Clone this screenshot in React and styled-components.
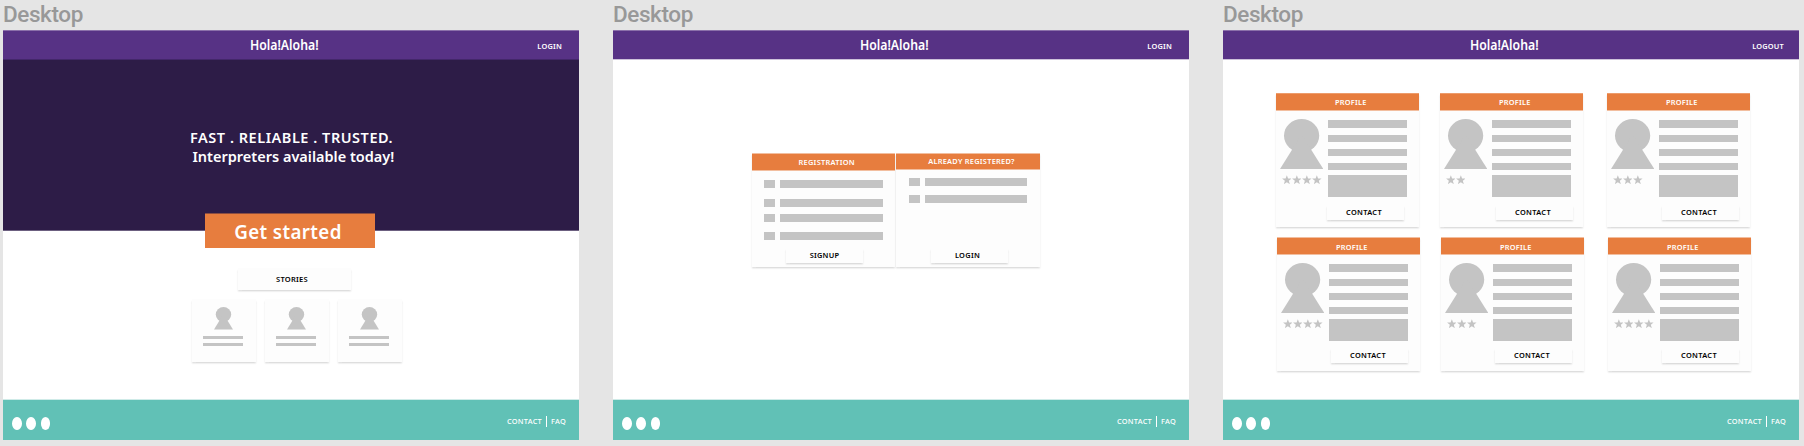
import React from "react";
import styled, { createGlobalStyle } from "styled-components";

const Global = createGlobalStyle`
  * { box-sizing: border-box; }
  body { margin: 0; background: #e5e5e5; overflow: hidden; font-family: "Noto Sans", "Open Sans", sans-serif; }
`;

const Canvas = styled.main`
  display: flex;
  gap: 34px;
  height: 446px;
  padding-left: 3px;
`;
const Artboard = styled.section`
  width: 576px;
  flex: none;
  display: flex;
  flex-direction: column;
`;
const ArtboardName = styled.div`
  height: 30px;
  line-height: 29px;
  font-family: Roboto, sans-serif;
  font-size: 22.5px;
  font-weight: 500;
  letter-spacing: -0.4px;
  color: #989898;
`;
const Screen = styled.div`
  height: 410px;
  background: #fff;
  display: flex;
  flex-direction: column;
`;
const Header = styled.header`
  height: 30px;
  background: #573285;
  border-top: 1px solid #8b70aa;
  border-bottom: 1px solid ${(p) => (p.$overHero ? "#43276a" : "#cdc2da")};
  display: flex;
  justify-content: space-between;
  padding-left: 246.5px;
  color: #fff;
`;
const Brand = styled.h1`
  margin: 0;
  font-size: 14.6px;
  font-weight: 600;
  line-height: 26px;
  white-space: nowrap;
  transform: scaleX(0.84);
  transform-origin: left;
`;
const HeaderLink = styled.a`
  font-size: 7.4px;
  font-weight: 600;
  letter-spacing: 0.2px;
  line-height: 30px;
  padding-right: ${(p) => p.$right}px;
`;
const Body = styled.div`
  flex: 1;
  display: flex;
  flex-direction: column;
`;
const Footer = styled.footer`
  height: 41px;
  background: #61c1b6;
  border-top: 1px solid #cfebe8;
  display: flex;
  justify-content: space-between;
  padding: 17px 13px 0 9px;
  color: #fff;
`;
const Dots = styled.div`
  display: flex;
  gap: 4.8px;
`;
const Dot = styled.i`
  width: 9.6px;
  height: 13px;
  border-radius: 50%;
  background: #fff;
`;
const FooterLinks = styled.nav`
  display: flex;
  font-size: 7.4px;
  font-weight: 500;
  letter-spacing: 0.25px;
  line-height: 8px;
`;
const Divider = styled.i`
  width: 1px;
  height: 11px;
  margin: -1px 4px 0;
  background: #fff;
`;

const Hero = styled.div`
  height: 171px;
  background: #2d1c47;
  border-bottom: 1px solid #6c6080;
  display: flex;
  flex-direction: column;
  align-items: flex-start;
  padding: 68px 0 0 187px;
  color: #fff;
`;
const HeroLine = styled.p`
  margin: 0 0 0 ${(p) => p.$indent}px;
  font-size: 14.5px;
  font-weight: 600;
  line-height: 19px;
  letter-spacing: ${(p) => p.$spacing}px;
  white-space: nowrap;
`;
const GetStarted = styled.button`
  border: 0;
  border-top: 1px solid #8a4d42;
  padding: 1px 4px 0 0;
  width: 170px;
  height: 35px;
  margin: -18px 0 0 202px;
  background: #e77d3e;
  color: #fff;
  font: 600 18.8px "Noto Sans", sans-serif;
  letter-spacing: 0.38px;
`;
const Raised = styled.div`
  background: #fdfdfd;
  box-shadow: 0 1.6px 1.6px rgba(0, 0, 0, 0.13);
`;
const StoriesTitle = styled(Raised)`
  width: 113px;
  height: 22px;
  margin: 20px 0 0 235px;
  padding-right: 5px;
  text-align: center;
  font-size: 7.5px;
  font-weight: 600;
  letter-spacing: 0.25px;
  line-height: 22px;
`;
const Stories = styled.div`
  display: flex;
  gap: 9px;
  margin: 9px 0 0 189px;
`;
const Story = styled(Raised)`
  width: 64px;
  height: 63px;
  padding: 8px 13px 0 11px;
  display: flex;
  flex-direction: column;
  align-items: center;
`;
const StoryLine = styled.i`
  width: 40px;
  height: 3px;
  margin-top: ${(p) => p.$top}px;
  background: #c4c4c4;
`;

const Forms = styled.div`
  display: flex;
  gap: 1px;
  margin: 93px 0 0 139px;
`;
const Card = styled(Raised)`
  width: ${(p) => p.$width}px;
  height: ${(p) => p.$height}px;
  margin-left: ${(p) => p.$left || 0}px;
`;
const CardHeader = styled.h2`
  margin: 0;
  height: ${(p) => p.$height || 18}px;
  margin-bottom: ${(p) => 17 - (p.$height || 18)}px;
  background: #e77d3e;
  border-top: 1px solid ${(p) => p.$edge};
  border-bottom: 1px solid #f2be9f;
  color: #fff;
  text-align: center;
  font-size: 7.4px;
  font-weight: 600;
  letter-spacing: ${(p) => p.$spacing}px;
  line-height: ${(p) => p.$line}px;
  padding-left: ${(p) => p.$shift || 0}px;
`;
const Field = styled.div`
  display: flex;
  gap: 5px;
  margin: ${(p) => p.$top}px 0 0 ${(p) => p.$left || 12}px;
`;
const Block = styled.i`
  display: block;
  width: ${(p) => p.$w}px;
  height: ${(p) => p.$h}px;
  margin-top: ${(p) => p.$top || 0}px;
  background: #c4c4c4;
`;
const CardButton = styled(Raised).attrs({ as: "button" })`
  display: block;
  border: 0;
  padding: 0 ${(p) => p.$pad || 0}px 0 0;
  width: 77px;
  height: 15px;
  margin: ${(p) => p.$top}px 0 0 ${(p) => p.$left}px;
  color: #000;
  font: 600 7.4px/15px "Noto Sans", sans-serif;
  letter-spacing: ${(p) => p.$spacing || 0.3}px;
`;

const Profiles = styled.div`
  display: flex;
  margin: ${(p) => p.$top}px 0 0 ${(p) => p.$left}px;
`;
const ProfileBody = styled.div`
  display: flex;
  gap: 5px;
  padding: 9px 0 0 4px;
`;
const PersonColumn = styled.div`
  width: 43px;
`;
const Stars = styled.div`
  display: flex;
  gap: 0.6px;
  margin: 5.5px 0 0 1.5px;
`;

const Person = ({ w, h }) => (
  <svg width={w} height={h} viewBox="0 0 43.3 50" preserveAspectRatio="none" fill="#c4c4c4" display="block">
    <ellipse cx="21.6" cy="16.7" rx="17.6" ry="16.7" />
    <path d="M21.6 15.4 43.3 50H0Z" />
  </svg>
);
const Star = () => (
  <svg width="9.7" height="9.7" viewBox="0 0 20 20" fill="#c4c4c4">
    <path d="M10 .5 12.6 7.1H19.8L14.1 11.7 16.1 18.9 10 14.8 3.9 18.9 5.9 11.7.2 7.1H7.4Z" />
  </svg>
);

const Page = ({ link, right, overHero, children }) => (
  <Artboard>
    <ArtboardName>Desktop</ArtboardName>
    <Screen>
      <Header $overHero={overHero}>
        <Brand>Hola!Aloha!</Brand>
        <HeaderLink $right={right}>{link}</HeaderLink>
      </Header>
      <Body>{children}</Body>
      <Footer>
        <Dots><Dot /><Dot /><Dot /></Dots>
        <FooterLinks><span>CONTACT</span><Divider /><span>FAQ</span></FooterLinks>
      </Footer>
    </Screen>
  </Artboard>
);

const Profile = ({ left, stars, buttonLeft, buttonTop, edge, line = 17 }) => (
  <Card $width={143} $height={134} $left={left}>
    <CardHeader $line={line} $spacing={0.25} $shift={6.5} $edge={edge}>PROFILE</CardHeader>
    <ProfileBody>
      <PersonColumn>
        <Person w={43.3} h={50} />
        <Stars>{Array.from({ length: stars }, (_, i) => <Star key={i} />)}</Stars>
      </PersonColumn>
      <div>
        <Block $w={79} $h={8} $top={1} />
        <Block $w={79} $h={7} $top={7} />
        <Block $w={79} $h={7} $top={7} />
        <Block $w={79} $h={7} $top={7} />
        <Block $w={79} $h={22} $top={5} />
      </div>
    </ProfileBody>
    <CardButton $left={buttonLeft} $top={buttonTop} $pad={3}>CONTACT</CardButton>
  </Card>
);

export default function App() {
  return (
    <>
      <Global />
      <Canvas>
        <Page link="LOGIN" right={17} overHero>
          <Hero>
            <HeroLine $indent={0} $spacing={0.53}>FAST . RELIABLE . TRUSTED.</HeroLine>
            <HeroLine $indent={2.5} $spacing={0}>Interpreters available today!</HeroLine>
          </Hero>
          <GetStarted>Get started</GetStarted>
          <StoriesTitle>STORIES</StoriesTitle>
          <Stories>
            {[0, 1, 2].map((i) => (
              <Story key={i}>
                <Person w={19} h={22.5} />
                <StoryLine $top={6.5} />
                <StoryLine $top={4} />
              </Story>
            ))}
          </Stories>
        </Page>

        <Page link="LOGIN" right={17}>
          <Forms>
            <Card $width={143} $height={114}>
              <CardHeader $line={17} $spacing={0.28} $shift={6.5} $edge="#f2be9f">REGISTRATION</CardHeader>
              {[10, 11, 7, 10].map((top, i) => (
                <Field key={i} $top={top}><Block $w={11} $h={8} /><Block $w={103} $h={8} /></Field>
              ))}
              <CardButton $left={34} $top={8} $spacing={0.2}>SIGNUP</CardButton>
            </Card>
            <Card $width={144} $height={114}>
              <CardHeader $height={17} $line={15} $spacing={0.26} $shift={7} $edge="#f2be9f">ALREADY REGISTERED?</CardHeader>
              {[8, 9].map((top, i) => (
                <Field key={i} $top={top} $left={13}><Block $w={11} $h={8} /><Block $w={102} $h={8} /></Field>
              ))}
              <CardButton $left={35} $top={45} $pad={4}>LOGIN</CardButton>
            </Card>
          </Forms>
        </Page>

        <Page link="LOGOUT" right={15}>
          <Profiles $top={33} $left={53}>
            <Profile edge="#ed9c6c" stars={4} buttonLeft={51} buttonTop={8} />
            <Profile edge="#ed9c6c" left={21} stars={2} buttonLeft={56} buttonTop={8} />
            <Profile edge="#ed9c6c" left={24} stars={3} buttonLeft={55} buttonTop={8} />
          </Profiles>
          <Profiles $top={10} $left={54}>
            <Profile edge="#f2be9f" line={18} stars={4} buttonLeft={54} buttonTop={7} />
            <Profile edge="#f2be9f" line={18} left={21} stars={3} buttonLeft={54} buttonTop={7} />
            <Profile edge="#f2be9f" line={18} left={24} stars={4} buttonLeft={54} buttonTop={7} />
          </Profiles>
        </Page>
      </Canvas>
    </>
  );
}
